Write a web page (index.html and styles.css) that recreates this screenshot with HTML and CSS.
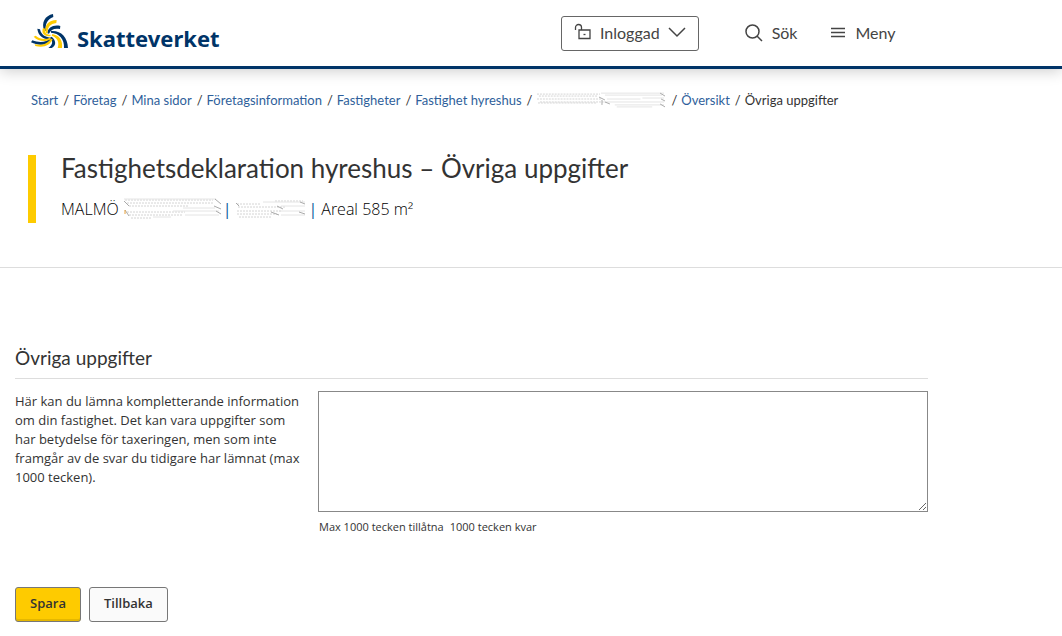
FILE: index.html
```html
<!DOCTYPE html>
<html lang="sv">
<head>
<meta charset="utf-8">
<meta name="viewport" content="width=device-width, initial-scale=1">
<title>Övriga uppgifter – Skatteverket</title>
<link rel="stylesheet" href="styles.css">
</head>
<body>
<header class="site-header">
  <a class="brand" href="#" aria-label="Skatteverket">
    <svg class="brand-mark" viewBox="0 0 114 105" aria-hidden="true">
      <g class="mark-blue">
        <path d="M66 0C42 5 30 25 40 52l5-2C42 31 48 17 67 9z"/>
        <path d="M88 36C68 31 50 40 49 58l5 1C60 46 70 42 87 45z"/>
        <path d="M19 44C21 64 36 77 60 76l1-5C44 71 30 62 27 46z"/>
        <path d="M0 85C26 98 52 93 64 74l-5-3C47 84 28 88 4 79z"/>
        <path d="M60 51C88 48 110 68 111 102l-12 0C101 76 84 57 60 56z"/>
        <path d="M62 68C76 80 76 94 62 102l-10 0C66 92 66 82 58 71z"/>
      </g>
      <g class="mark-yellow">
        <path d="M77 18C52 18 38 35 45 58l5-1C49 40 58 29 76 27z"/>
        <path d="M36 42C30 58 40 68 58 67l1-5C45 62 40 55 43 44z"/>
        <path d="M8 68C22 83 44 85 60 75l-3-4C42 78 27 75 14 65z"/>
        <path d="M13 96C38 103 57 94 65 76l-5-2C51 88 33 95 11 91z"/>
        <path d="M64 60C86 64 96 80 93 102l-13 0C86 84 79 71 62 65z"/>
      </g>
    </svg>
    <span class="brand-name">Skatteverket</span>
  </a>
  <nav class="tools" aria-label="Verktyg">
    <button class="login" type="button">
      <svg class="lock" viewBox="0 0 18 18" aria-hidden="true"><path d="M1.500 7V4.500a3 3 0 0 1 6 0V7M5 7h11v8.500H5z"/><path d="M9.500 11.500h2"/></svg>
      <span>Inloggad</span>
      <svg class="chevron" viewBox="0 0 18 12" aria-hidden="true"><path d="M1 2l8 8 8-8"/></svg>
    </button>
    <button class="tool" type="button">
      <svg class="search" viewBox="0 0 18 18" aria-hidden="true"><circle cx="7.500" cy="7.500" r="6.500"/><path d="M12 12l5 5"/></svg>
      <span>Sök</span>
    </button>
    <button class="tool menu" type="button">
      <svg class="bars" viewBox="0 0 14 11" aria-hidden="true"><path d="M0 1.500h14M0 5.500h14M0 9.500h14"/></svg>
      <span>Meny</span>
    </button>
  </nav>
</header>

<nav class="crumbs" aria-label="Brödsmulor">
  <ol>
    <li><a href="#">Start</a></li>
    <li><a href="#">Företag</a></li>
    <li><a href="#">Mina sidor</a></li>
    <li><a href="#">Företagsinformation</a></li>
    <li><a href="#">Fastigheter</a></li>
    <li><a href="#">Fastighet hyreshus</a></li>
    <li><svg class="smudge smudge-crumb" viewBox="0 0 132 16" aria-hidden="true">
      <path class="dots" d="M1 2h64M3 4h60M1 7h66M4 10h64M2 11h60"/>
      <path class="faint" d="M66 1h64M70 3h58M72 7h34M108 6h22M68 10h62M80 13h50M82 15h36"/>
      <path class="dark" d="M64 5l6 3M67 8v5M70 10l5 2M126 1l5 3M127 7l4 2M126 12l5 3"/>
    </svg></li>
    <li><a href="#">Översikt</a></li>
    <li aria-current="page">Övriga uppgifter</li>
  </ol>
</nav>

<main>
  <section class="intro">
    <div class="intro-text">
      <h1>Fastighetsdeklaration hyreshus – Övriga uppgifter</h1>
      <p class="property">
        <span>MALMÖ</span>
        <svg class="smudge smudge-name" viewBox="0 0 100 22" aria-hidden="true">
          <path class="dots" d="M2 2h88M4 5h86M6 8h60M4 14h58M6 17h54M8 20h20"/>
          <path class="faint" d="M1 1h92M60 10h32M50 13h46M62 17h34M30 19h18"/>
          <path class="dark" d="M1 3l5 5M2 12l4 6M92 1l6 5M91 8l7 3M93 13l5 3"/>
          <path class="speck" d="M2 12v4"/>
        </svg>
        <span class="pipe">|</span>
        <svg class="smudge smudge-id" viewBox="0 0 72 22" aria-hidden="true">
          <path class="dots" d="M2 6h24M3 9h48M2 13h44M2 16h40M4 19h32M40 3h28"/>
          <path class="faint" d="M28 4h42M46 8h24M44 13h26M46 17h24"/>
          <path class="dark" d="M1 5l3 3M42 8l6 3M36 14l8 3M65 4l5 2M64 14l6 2"/>
        </svg>
        <span class="pipe pipe-last">|</span>
        <span>Areal 585 m²</span>
      </p>
    </div>
  </section>

  <form class="details">
    <h2>Övriga uppgifter</h2>
    <div class="field">
      <label for="info">Här kan du lämna kompletterande information om din fastighet. Det kan vara uppgifter som har betydelse för taxeringen, men som inte framgår av de svar du tidigare har lämnat (max 1000 tecken).</label>
      <div class="entry">
        <textarea id="info" maxlength="1000" aria-describedby="info-limit"></textarea>
        <p class="limit" id="info-limit"><span>Max 1000 tecken tillåtna</span><span>1000 tecken kvar</span></p>
      </div>
    </div>
    <div class="actions">
      <button class="btn btn-primary" type="button">Spara</button>
      <button class="btn" type="button">Tillbaka</button>
    </div>
  </form>
</main>
</body>
</html>
```

FILE: styles.css
```css
* {
  box-sizing: border-box;
}

body {
  margin: 0;
  background: #fff;
  color: #333;
  font-family: "Open Sans", sans-serif;
  font-size: 13px;
}

h1, h2, p, ol {
  margin: 0;
}

a {
  color: #2f5f9b;
  text-decoration: none;
}

button {
  font: inherit;
  color: inherit;
  cursor: pointer;
}

svg {
  flex: none;
  fill: none;
  stroke: currentColor;
}

.site-header {
  display: grid;
  grid-template-columns: 530px 1fr;
  align-items: center;
  height: 69px;
  padding-left: 31px;
  border-bottom: 3px solid #003468;
  box-shadow: 0 2px 14px rgba(0, 0, 0, 0.2);
}

.brand {
  display: flex;
  align-items: center;
  gap: 8px;
  padding-bottom: 4px;
  color: #003468;
}

.brand-mark {
  width: 38px;
  height: 35px;
  stroke: none;
}

.mark-blue {
  fill: #003468;
}

.mark-yellow {
  fill: #fecb00;
}

.brand-name {
  padding-top: 14px;
  font-family: "Noto Sans", sans-serif;
  font-size: 22px;
  font-weight: 700;
  line-height: 30px;
}

.tools {
  display: flex;
  align-items: center;
  color: #444;
  font-family: Lato, sans-serif;
  font-size: 16px;
}

.login {
  display: flex;
  align-items: center;
  gap: 8px;
  height: 35px;
  padding: 0 12px 2px;
  border: 1px solid #666;
  border-radius: 3px;
  background: #fff;
}

.lock {
  width: 18px;
  height: 18px;
  stroke-width: 1.300;
}

.chevron {
  width: 18px;
  height: 12px;
  stroke-width: 1.500;
}

.tool {
  display: flex;
  align-items: center;
  gap: 9px;
  margin-left: 46px;
  padding: 0 0 1px;
  border: 0;
  background: none;
}

.menu {
  gap: 10px;
  margin-left: 34px;
}

.search {
  width: 18px;
  height: 18px;
  stroke-width: 1.500;
}

.bars {
  width: 14px;
  height: 11px;
  stroke-width: 1.500;
}

.crumbs {
  padding: 22px 31px 0;
  font-family: Lato, sans-serif;
  line-height: 18px;
}

.crumbs ol {
  display: flex;
  padding: 0;
  list-style: none;
}

.crumbs li {
  display: flex;
  align-items: center;
}

.crumbs li + li::before {
  content: "/";
  margin: 0 4px 0 5px;
}

.smudge .dots {
  stroke: #d4d4d4;
  stroke-dasharray: 2 1;
}

.smudge .faint {
  stroke: #e4e4e4;
}

.smudge .dark {
  stroke: #aaa;
}

.smudge .speck {
  stroke: #e9a23b;
}

.smudge-crumb {
  width: 130px;
  height: 16px;
}

.intro {
  padding: 46px 28px 44px;
  border-bottom: 1px solid #ddd;
}

.intro-text {
  padding-left: 25px;
  border-left: 8px solid #fecb00;
}

h1 {
  font-family: Lato, sans-serif;
  font-size: 26px;
  font-weight: 400;
  line-height: 26px;
}

.property {
  display: flex;
  align-items: center;
  padding: 16px 0 2px;
  color: #000;
  font-size: 16px;
  font-weight: 300;
  line-height: 24px;
}

.smudge-name {
  width: 100px;
  height: 22px;
  margin-left: 4px;
}

.smudge-id {
  width: 72px;
  height: 22px;
  margin: 0 1px 0 4px;
}

.pipe {
  color: #0b5a9b;
  font-weight: 400;
}

.pipe-last {
  margin-right: 4px;
}

.details {
  max-width: 928px;
  padding: 76px 0 0 15px;
}

h2 {
  padding-bottom: 6px;
  border-bottom: 1px solid #ddd;
  font-family: Lato, sans-serif;
  font-size: 19px;
  font-weight: 400;
  line-height: 28px;
}

.field {
  display: grid;
  grid-template-columns: 287px 1fr;
  gap: 16px;
  padding-top: 12px;
}

.field label {
  padding-top: 1px;
  line-height: 19px;
}

.entry textarea {
  display: block;
  width: 100%;
  height: 121px;
  border: 1px solid #888;
  background: #fff;
  font: inherit;
}

.limit {
  display: flex;
  gap: 6px;
  padding: 6px 1px 0;
  font-size: 11px;
  line-height: 18px;
}

.actions {
  display: flex;
  gap: 8px;
  padding-top: 51px;
}

.btn {
  height: 35px;
  padding: 0 14px 3px;
  border: 1px solid #777;
  border-radius: 3px;
  background: #fafafa;
  font-weight: 600;
}

.btn-primary {
  background: #fecb00;
  box-shadow: inset 0 -2px 0 #e5b700;
}
```
